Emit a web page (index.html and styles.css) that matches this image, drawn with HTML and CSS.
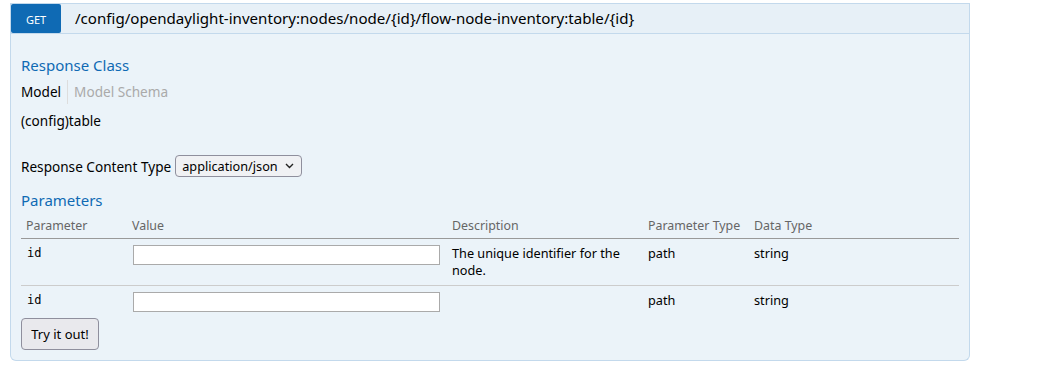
FILE: index.html
```html
<!DOCTYPE html>
<html>
<head>
<meta charset="utf-8">
<link rel="stylesheet" href="styles.css">
</head>
<body>
<div class="op">
  <div class="heading">
    <span class="badge">GET</span>
    <span class="path">/config/opendaylight-inventory:nodes/node/{id}/flow-node-inventory:table/{id}</span>
  </div>
  <div class="content">
    <h4 class="title">Response Class</h4>
    <div class="tabs">
      <span class="tab active">Model</span>
      <span class="tab">Model Schema</span>
    </div>
    <div class="model">(config)table</div>
    <div class="ctype">
      <label class="ctype-label">Response Content Type</label>
      <div class="ctype-select">
        <span>application/json</span>
        <svg class="chev" width="9" height="6" viewBox="0 0 9 6"><path d="M1 1l3.5 3.5 3.5-3.5" fill="none" stroke="#222" stroke-width="1.4"/></svg>
      </div>
    </div>
    <h4 class="title params-title">Parameters</h4>
    <table class="params">
      <colgroup>
        <col class="c1"><col class="c2"><col class="c3"><col class="c4"><col class="c5">
      </colgroup>
      <thead>
        <tr><th>Parameter</th><th>Value</th><th>Description</th><th>Parameter Type</th><th>Data Type</th></tr>
      </thead>
      <tbody>
        <tr class="sep">
          <td class="code">id</td>
          <td><input class="field" type="text"></td>
          <td>The unique identifier for the node.</td>
          <td>path</td>
          <td>string</td>
        </tr>
        <tr>
          <td class="code">id</td>
          <td><input class="field" type="text"></td>
          <td></td>
          <td>path</td>
          <td>string</td>
        </tr>
      </tbody>
    </table>
    <button class="try">Try it out!</button>
  </div>
</div>
</body>
</html>
```

FILE: styles.css
```css
* { box-sizing: border-box; }
body {
  margin: 0;
  font-family: "Noto Sans", "Open Sans", sans-serif;
  color: #000;
  background: #fff;
}
.op {
  width: 960px;
  margin: 3px 0 0 10px;
}
.heading {
  display: flex;
  align-items: stretch;
  height: 31px;
  background: #e7f0f7;
  border: 1px solid #c3d9ec;
}
.badge {
  width: 50px;
  background: #0f6ab4;
  color: #fff;
  font-size: 11px;
  display: flex;
  align-items: center;
  justify-content: center;
  padding-top: 2px;
  border-radius: 2px;
}
.path {
  margin-left: 14px;
  font-size: 15.1px;
  line-height: 28px;
}
.content {
  background: #ebf3f9;
  border: 1px solid #c3d9ec;
  border-top: none;
  border-radius: 0 0 6px 6px;
  padding: 21px 10px 10px;
}
.title {
  margin: 0;
  font-size: 15px;
  line-height: 20px;
  font-weight: normal;
  color: #0f6ab4;
}
.tabs {
  display: flex;
  margin-top: 5px;
  height: 24px;
  align-items: center;
}
.tab {
  font-size: 13.6px;
  line-height: 24px;
  color: #aaa;
  padding-left: 6px;
}
.tab.active {
  color: #000;
  padding: 0 6px 0 0;
  border-right: 1px solid #ddd;
}
.model {
  margin-top: 8px;
  font-size: 13.6px;
  line-height: 18px;
}
.ctype {
  display: flex;
  align-items: center;
  margin-top: 25px;
  height: 22px;
}
.ctype-label {
  font-size: 13.6px;
  margin-right: 4px;
}
.ctype-select {
  display: flex;
  align-items: center;
  justify-content: space-between;
  font-size: 12.7px;
  height: 22px;
  width: 127px;
  padding: 0 7px 0 6px;
  background: #f0f1f4;
  border: 1px solid #8f8f9d;
  border-radius: 4px;
}
.chev { display: block; }
.params-title {
  margin-top: 13px;
}
.params {
  width: 100%;
  margin-top: 4px;
  border-collapse: collapse;
  table-layout: fixed;
}
.c1 { width: 106px; }
.c2 { width: 320px; }
.c3 { width: 196px; }
.c4 { width: 106px; }
.c5 { width: auto; }
.params th {
  font-size: 12.4px;
  font-weight: normal;
  color: #666;
  text-align: left;
  padding: 3px 5px 4px;
  line-height: 17px;
  border-bottom: 1px solid #999;
}
.params td {
  font-size: 12.7px;
  line-height: 17px;
  vertical-align: top;
  padding: 6px 5px;
}
.params tr.sep td {
  border-bottom: 1px solid #ccc;
}
.params td.code {
  font-family: "DejaVu Sans Mono", monospace;
  font-size: 12px;
  padding-left: 6px;
}
.field {
  display: block;
  width: 307px;
  height: 20px;
  margin-left: 1px;
  border: 1px solid #aaa;
  background: #fff;
  padding: 0 3px;
}
.try {
  display: block;
  font-family: "Noto Sans", "Open Sans", sans-serif;
  font-size: 13px;
  width: 78px;
  height: 32px;
  background: #e9e9ed;
  border: 1px solid #8f8f9d;
  border-radius: 4px;
  color: #000;
}
```
